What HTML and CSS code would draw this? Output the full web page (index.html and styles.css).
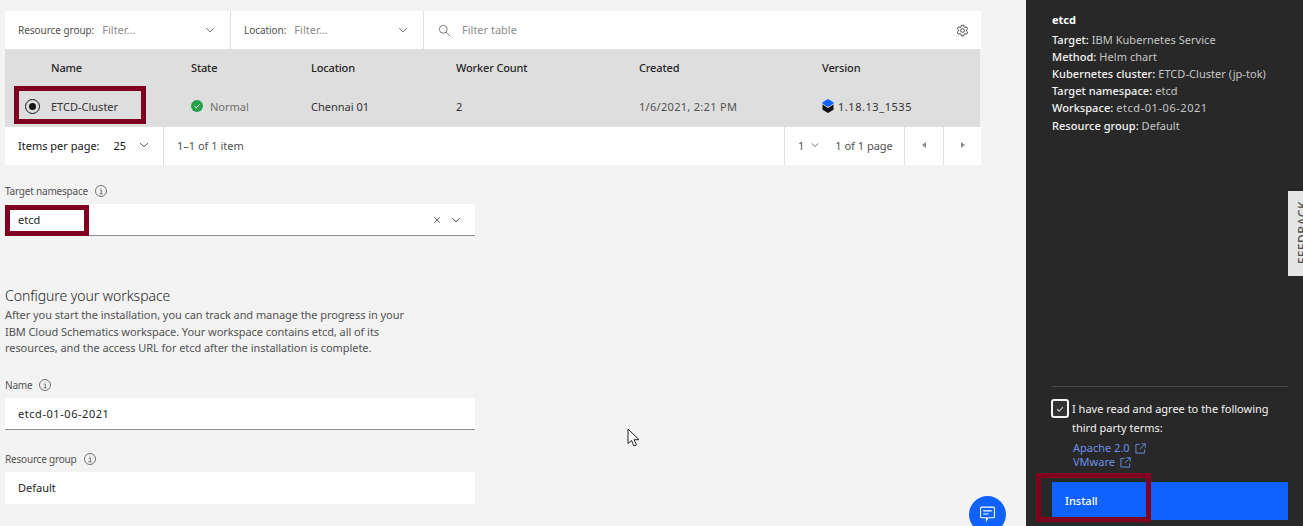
FILE: index.html
```html
<!DOCTYPE html>
<html>
<head>
<meta charset="utf-8">
<title>Install etcd</title>
<link rel="stylesheet" href="styles.css">
</head>
<body>

<div class="page">
  <div class="main">

    <div class="toolbar">
      <div class="filter filter_group">
        <span class="filter_label">Resource group:</span>
        <span class="filter_text">Filter...</span>
        <svg class="chevron" viewBox="0 0 16 16"><path d="M3 5.5l5 5 5-5"/></svg>
      </div>
      <div class="filter filter_location">
        <span class="filter_label">Location:</span>
        <span class="filter_text">Filter...</span>
        <svg class="chevron" viewBox="0 0 16 16"><path d="M3 5.5l5 5 5-5"/></svg>
      </div>
      <div class="filter filter_search">
        <svg class="search_icon" viewBox="0 0 16 16"><circle cx="6.5" cy="6.5" r="4.8"/><path d="M10 10l5 5"/></svg>
        <span class="filter_text">Filter table</span>
        <svg class="gear_icon" viewBox="0 0 16 16">
          <path d="M6.6 1.5h2.8l.4 2 1.3.7 1.9-.7 1.4 2.5-1.5 1.3v1.4l1.5 1.3-1.4 2.5-1.9-.7-1.3.7-.4 2H6.6l-.4-2-1.3-.7-1.9.7-1.4-2.5 1.5-1.3V7.3L1.6 6l1.4-2.5 1.9.7 1.3-.7z"/>
          <circle cx="8" cy="8" r="2.3"/>
        </svg>
      </div>
    </div>

    <div class="table">
      <div class="row head_row">
        <div>Name</div>
        <div>State</div>
        <div>Location</div>
        <div>Worker Count</div>
        <div>Created</div>
        <div>Version</div>
      </div>
      <div class="row data_row">
        <div class="name_cell">
          <span class="radio"><span class="radio_dot"></span></span>
          ETCD-Cluster
        </div>
        <div class="state_cell">
          <svg class="status_icon" viewBox="0 0 12 12"><circle cx="6" cy="6" r="6" fill="#24a148"/><path d="M3.5 6.2l1.8 1.7 3.2-3.4" fill="none" stroke="#fff" stroke-width="1"/></svg>
          Normal
        </div>
        <div>Chennai 01</div>
        <div>2</div>
        <div class="muted_cell">1/6/2021, 2:21 PM</div>
        <div class="version_cell">
          <svg class="version_icon" viewBox="0 0 12 14">
            <path d="M6 0l5.5 3.2v1.6L6 8 .5 4.8V3.2z" fill="#0f62fe"/>
            <path d="M.5 5.6L4 7.7 6 9l2-1.3 3.5-2.1v5.2L6 14 .5 10.800z" fill="#111"/>
          </svg>
          <span class="num">1.18.13_1535</span>
        </div>
      </div>
    </div>

    <div class="pager">
      <div class="pager_size">
        <span>Items per page:</span>
        <span class="pager_num">25</span>
        <svg class="chevron dark" viewBox="0 0 16 16"><path d="M3 5.5l5 5 5-5"/></svg>
      </div>
      <div class="pager_count">1–1 of 1 item</div>
      <div class="pager_page">
        <span class="pager_one">1</span>
        <svg class="chevron dark" viewBox="0 0 16 16"><path d="M3 5.5l5 5 5-5"/></svg>
        <span class="pager_of">1 of 1 page</span>
      </div>
      <div class="pager_btn"><span class="tri tri_left"></span></div>
      <div class="pager_btn"><span class="tri tri_right"></span></div>
    </div>

    <div class="field namespace_field">
      <div class="field_label">Target namespace
        <svg class="info" viewBox="0 0 12 12"><circle cx="6" cy="6" r="5.500"/><path d="M4.800 5h1.500v3.500M4.500 8.800h3.200M5.800 3.200h.6"/></svg>
      </div>
      <div class="input underlined">
        <span>etcd</span>
        <span class="input_icons">
          <svg class="clear_icon" viewBox="0 0 10 10"><path d="M1.500 1.500l7 7M8.500 1.500l-7 7"/></svg>
          <svg class="chevron dark" viewBox="0 0 16 16"><path d="M3 5.500l5 5 5-5"/></svg>
        </span>
      </div>
    </div>

    <div class="workspace">
      <div class="workspace_title">Configure your workspace</div>
      <p class="workspace_text">After you start the installation, you can track and manage the progress in your<br>IBM Cloud Schematics workspace. Your workspace contains etcd, all of its<br>resources, and the access URL for etcd after the installation is complete.</p>
    </div>

    <div class="field name_field">
      <div class="field_label">Name
        <svg class="info" viewBox="0 0 12 12"><circle cx="6" cy="6" r="5.500"/><path d="M4.800 5h1.500v3.500M4.500 8.800h3.200M5.800 3.200h.6"/></svg>
      </div>
      <div class="input underlined"><span class="num">etcd-01-06-2021</span></div>
    </div>

    <div class="field group_field">
      <div class="field_label">Resource group
        <svg class="info" viewBox="0 0 12 12"><circle cx="6" cy="6" r="5.500"/><path d="M4.800 5h1.500v3.500M4.500 8.800h3.200M5.800 3.200h.6"/></svg>
      </div>
      <div class="input"><span>Default</span></div>
    </div>

  </div>

  <div class="side">
    <div class="summary">
      <div class="summary_title">etcd</div>
      <div class="summary_line"><b>Target:</b> IBM Kubernetes Service</div>
      <div class="summary_line"><b>Method:</b> Helm chart</div>
      <div class="summary_line"><b>Kubernetes cluster:</b> ETCD-Cluster (jp-tok)</div>
      <div class="summary_line"><b>Target namespace:</b> etcd</div>
      <div class="summary_line"><b>Workspace:</b> <span class="num">etcd-01-06-2021</span></div>
      <div class="summary_line summary_last"><b>Resource group:</b> Default</div>
    </div>

    <div class="terms">
      <div class="terms_check">
        <span class="checkbox">
          <svg viewBox="0 0 12 12"><path d="M2.500 6.300l2.500 2.500 4.500-5"/></svg>
        </span>
        <span class="terms_text">I have read and agree to the following<br>third party terms:</span>
      </div>
      <div class="terms_links">
        <a class="terms_link">Apache 2.0
          <svg class="ext_icon" viewBox="0 0 12 12"><path d="M5 1.500H1v9.500h9.500V7M7 .8h4.200V5M11 1L5.500 6.500"/></svg>
        </a>
        <a class="terms_link">VMware
          <svg class="ext_icon" viewBox="0 0 12 12"><path d="M5 1.500H1v9.500h9.500V7M7 .8h4.200V5M11 1L5.500 6.500"/></svg>
        </a>
      </div>
      <div class="install_btn">Install</div>
    </div>
  </div>
</div>

<!-- things on top of the page -->
<div class="mark mark_cluster"></div>
<div class="mark mark_namespace"></div>
<div class="mark mark_install"></div>

<div class="feedback"><span>FEEDBACK</span></div>

<div class="chat_btn">
  <svg viewBox="0 0 16 16"><path d="M2.500 2h11a1 1 0 0 1 1 1v8a1 1 0 0 1-1 1H8.500l-1.500 2.500V12H2.500a1 1 0 0 1-1-1V3a1 1 0 0 1 1-1z"/><path d="M4 5.500h8M4 8.500h5"/></svg>
</div>

<svg class="cursor" viewBox="0 0 13 20"><path d="M1 1v14.500l3.500-3 2.400 5.500 2.600-1.100-2.400-5.200H12z"/></svg>

</body>
</html>
```

FILE: styles.css
```css
* {
  box-sizing: border-box;
}

html, body {
  margin: 0;
  height: 526px;
  overflow: hidden;
}

body {
  position: relative;
  background-color: #f3f3f3;
  color: #161616;
  font-family: "Noto Sans", "Open Sans", sans-serif;
  font-size: 11px;
}

.page {
  display: flex;
  height: 526px;
}

.num {
  letter-spacing: .55px;
}

/* left column */
.main {
  width: 1026px;
  padding: 11px 45px 0 5px;
}

.toolbar {
  display: flex;
  height: 38px;
  background-color: #fff;
}

.filter {
  display: flex;
  align-items: center;
  height: 100%;
  border-right: 1px solid #e0e0e0;
}

.filter_group {
  width: 226px;
  padding: 0 14px 0 13px;
}

.filter_location {
  width: 193px;
  padding: 0 14px 0 13px;
}

.filter_search {
  flex: 1;
  padding: 0 12px 0 14px;
  border-right: none;
}

.filter_label {
  color: #525252;
  font-size: 10px;
  letter-spacing: -.05px;
  margin-right: 8px;
}

.filter_text {
  color: #8d8d8d;
  font-size: 11px;
  position: relative;
  top: -1px;
}

.chevron {
  width: 12px;
  height: 12px;
  margin-left: auto;
  fill: none;
  stroke: #525252;
  stroke-width: 1.2;
}

.chevron.dark {
  stroke: #393939;
}

.search_icon {
  width: 13px;
  height: 13px;
  margin-right: 11px;
  fill: none;
  stroke: #6f6f6f;
  stroke-width: 1.1;
}

.gear_icon {
  width: 13px;
  height: 13px;
  margin-left: auto;
  fill: none;
  stroke: #262626;
  stroke-width: 1;
}

.table {
  width: 975px;
  background-color: #dedede;
}

.row {
  display: grid;
  grid-template-columns: 186px 120px 145px 183px 183px 1fr;
  align-items: center;
  padding-bottom: 2px;
}

.row > div:first-child {
  padding-left: 46px;
}

.head_row {
  height: 38px;
  font-weight: 500;
  letter-spacing: -.15px;
  color: #262626;
}

.data_row {
  height: 40px;
  color: #333;
}

.name_cell {
  position: relative;
}

.radio {
  position: absolute;
  left: 20px;
  top: 50%;
  width: 15px;
  height: 15px;
  margin-top: -7px;
  border: 1px solid #161616;
  border-radius: 50%;
  display: flex;
  align-items: center;
  justify-content: center;
}

.radio_dot {
  width: 7px;
  height: 7px;
  border-radius: 50%;
  background-color: #161616;
}

.state_cell {
  display: flex;
  align-items: center;
  gap: 7px;
  color: #6f6f6f;
}

.status_icon {
  width: 12px;
  height: 12px;
}

.muted_cell {
  color: #525252;
  letter-spacing: .3px;
}

.version_cell {
  display: flex;
  align-items: center;
  gap: 4px;
}

.version_icon {
  width: 12px;
  height: 14px;
}

.pager {
  display: flex;
  height: 38px;
  background-color: #fff;
  align-items: stretch;
}

.pager > div {
  display: flex;
  align-items: center;
  padding-bottom: 2px;
}

.pager_size {
  width: 159px;
  padding: 0 13px;
  border-right: 1px solid #e0e0e0;
}

.pager_num {
  margin-left: 14px;
}

.pager_count {
  flex: 1;
  padding-left: 13px;
  color: #525252;
}

.pager_page {
  width: 120px;
  padding-left: 13px;
  border-left: 1px solid #e0e0e0;
  color: #525252;
}

.pager_page .chevron {
  width: 10px;
  height: 10px;
  margin: 0 0 0 6px;
}

.pager_of {
  margin-left: 15px;
}

.pager_btn {
  width: 39px;
  justify-content: center;
  border-left: 1px solid #e0e0e0;
}

.pager_btn:last-child {
  width: 38px;
}

.tri {
  width: 0;
  height: 0;
  border-top: 3px solid transparent;
  border-bottom: 3px solid transparent;
}

.tri_left {
  border-right: 4px solid #8d8d8d;
}

.tri_right {
  border-left: 4px solid #8d8d8d;
}

/* form fields */
.field {
  width: 470px;
}

.namespace_field {
  margin-top: 19px;
}

.name_field {
  margin-top: 21px;
}

.group_field {
  margin-top: 22px;
}

.field_label {
  display: flex;
  align-items: center;
  gap: 7px;
  height: 14px;
  margin-bottom: 6px;
  color: #525252;
  font-size: 10px;
  letter-spacing: -.2px;
}

.info {
  width: 12px;
  height: 12px;
  fill: none;
  stroke: #525252;
  stroke-width: .8;
}

.input {
  display: flex;
  align-items: center;
  height: 32px;
  padding: 0 13px;
  background-color: #fff;
  color: #262626;
}

.input.underlined {
  border-bottom: 1px solid #8d8d8d;
}

.input_icons {
  display: flex;
  align-items: center;
  gap: 9px;
  margin-left: auto;
}

.clear_icon {
  width: 8px;
  height: 8px;
  fill: none;
  stroke: #525252;
  stroke-width: 1.1;
}

.workspace {
  margin-top: 51px;
  width: 470px;
}

.workspace_title {
  font-size: 14px;
  font-weight: 300;
  letter-spacing: -.05px;
  line-height: 18px;
  color: #262626;
}

.workspace_text {
  margin: 2px 0 0;
  line-height: 16.500px;
  letter-spacing: -.06px;
  color: #525252;
}

/* right side panel */
.side {
  display: flex;
  flex-direction: column;
  justify-content: space-between;
  width: 277px;
  padding: 13px 15px 6px 26px;
  background-color: #282828;
  color: #c6c6c6;
}

.summary_title {
  color: #fff;
  font-weight: 700;
  line-height: 14px;
  margin-bottom: 4px;
}

.summary_line {
  line-height: 17px;
  letter-spacing: .05px;
}

.summary_last {
  margin-top: 1px;
}

.summary_line b {
  color: #f4f4f4;
  font-weight: 500;
}

.terms {
  border-top: 1px solid #4a4a4a;
  padding-top: 12px;
}

.terms_check {
  display: flex;
  gap: 3px;
  margin-left: -1px;
}

.checkbox {
  display: flex;
  align-items: center;
  justify-content: center;
  flex: none;
  width: 18px;
  height: 19px;
  border: 2px solid #f4f4f4;
  border-radius: 3px;
  background-color: #333;
}

.checkbox svg {
  width: 10px;
  height: 10px;
  fill: none;
  stroke: #d0d0d0;
  stroke-width: 1.3;
}

.terms_text {
  color: #f4f4f4;
  line-height: 19px;
}

.terms_links {
  margin: 4px 0 0 21px;
}

.terms_link {
  display: flex;
  align-items: center;
  gap: 5px;
  color: #6b8fe8;
  line-height: 14px;
}

.ext_icon {
  width: 11px;
  height: 11px;
  fill: none;
  stroke: #6b8fe8;
  stroke-width: 1;
}

.install_btn {
  display: flex;
  align-items: center;
  height: 38px;
  margin-top: 13px;
  padding-left: 13px;
  padding-bottom: 2px;
  background-color: #0f62fe;
  color: #fff;
  font-weight: 500;
}

/* overlays */
.mark {
  position: absolute;
  border: 5px solid #80001f;
}

.mark_cluster {
  left: 14px;
  top: 86px;
  width: 132px;
  height: 38px;
}

.mark_namespace {
  left: 5px;
  top: 205px;
  width: 84px;
  height: 31px;
}

.mark_install {
  left: 1036px;
  top: 473px;
  width: 115px;
  height: 49px;
}

.feedback {
  position: absolute;
  left: 1288px;
  top: 191px;
  width: 15px;
  height: 85px;
  background-color: #e5e5e5;
  overflow: hidden;
}

.feedback span {
  position: absolute;
  left: 6px;
  top: 10px;
  writing-mode: vertical-rl;
  transform: rotate(180deg);
  font-size: 12px;
  font-weight: 500;
  color: #525252;
  letter-spacing: .5px;
}

.chat_btn {
  position: absolute;
  left: 969px;
  top: 496px;
  width: 37px;
  height: 37px;
  padding-top: 9px;
  border-radius: 50%;
  background-color: #0f62fe;
  text-align: center;
}

.chat_btn svg {
  width: 17px;
  height: 17px;
  fill: none;
  stroke: #fff;
  stroke-width: 1;
}

.cursor {
  position: absolute;
  left: 627px;
  top: 428px;
  width: 13px;
  height: 20px;
  fill: #f8f8f8;
  stroke: #222;
  stroke-width: 1;
}
```
